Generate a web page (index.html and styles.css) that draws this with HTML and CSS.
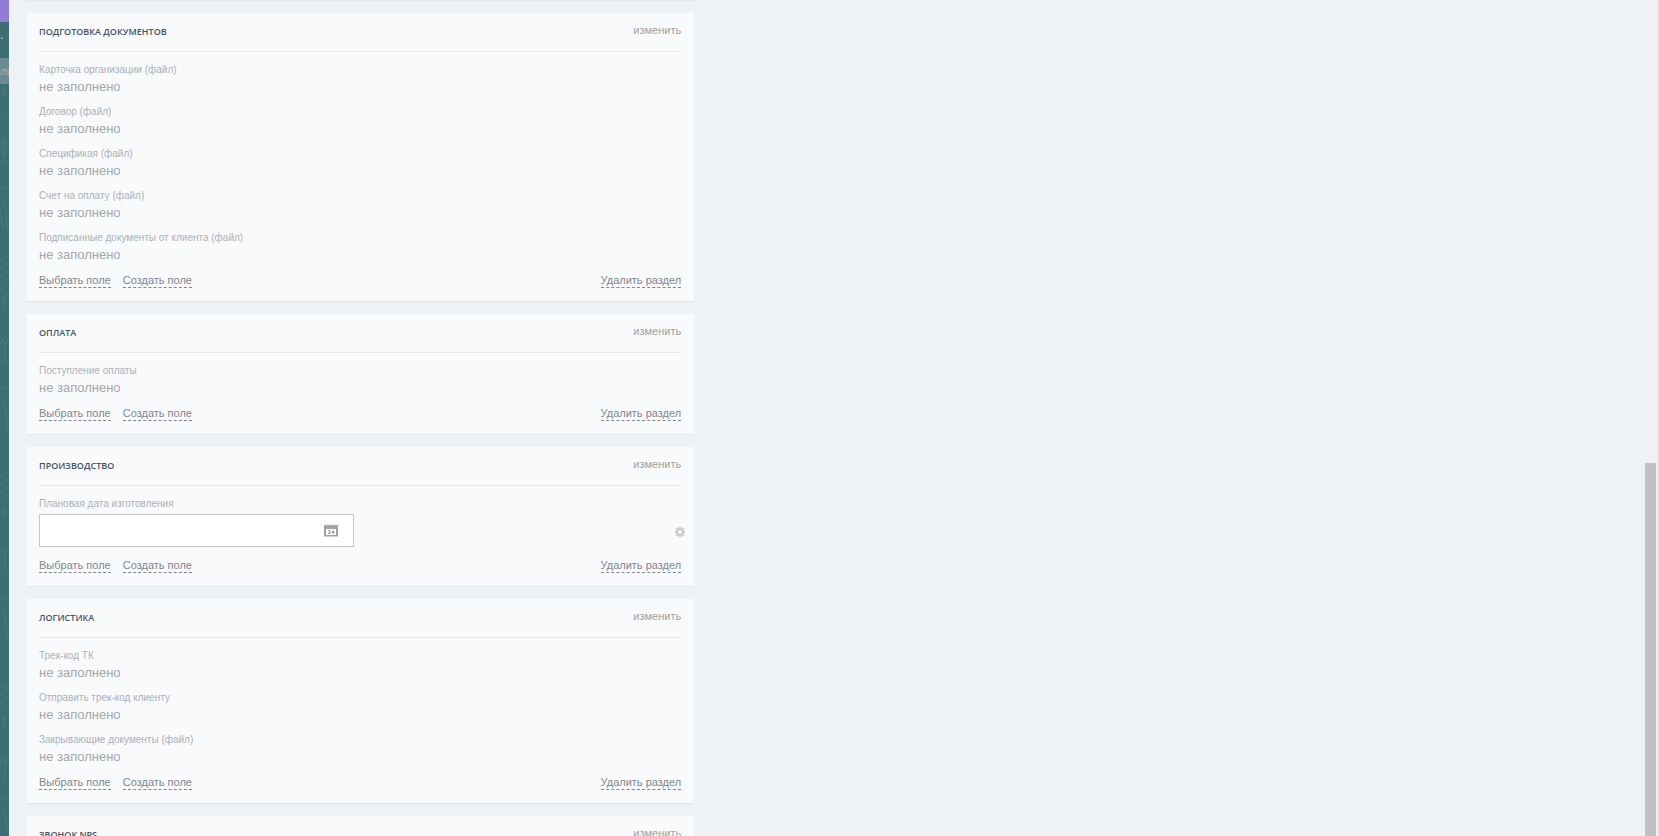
FILE: index.html
```html
<!DOCTYPE html>
<html lang="ru">
<head>
    <meta charset="UTF-8">
    <meta name="viewport" content="width=device-width, initial-scale=1.0">
    <title>Сделка</title>
    <link rel="stylesheet" href="styles.css">
</head>
<body>
    <div class="backdrop">
        <div class="backdrop-header"></div>
        <div class="backdrop-tools"><span>.</span></div>
        <div class="backdrop-tab"><span>ли</span></div>
        <svg class="backdrop-pattern" width="9" height="752" viewBox="0 0 9 752" fill="none" stroke="#4a7a7e">
            <path d="M4 2l1 4 1 1-1 1-1 4-1-4-1-1 1-1zM0 32l2 4M0 62l3-8 2 6 4-7M2 58l1 14 4-10M0 78l5-2v-16M0 106l9-3M0 116l4 0 4 30M0 124l3 20 6-4M0 175l9 5M0 183l9 5M0 191l9 6M0 198l9 6M0 205l9 7"/>
            <path d="M4 212l1 4 1 1-1 1-1 4-1-4-1-1 1-1zM0 262l3-8 2 6 4-7M0 278l5-2v-16M0 306l9-3M0 316l4 0 4 30M0 391l9 5M0 399l9 5M0 407l9 6"/>
            <path d="M4 423l1 4 1 1-1 1-1 4-1-4-1-1 1-1zM0 472l3-8 2 6 4-7M0 488l5-2v-16M0 516l9-3M0 526l4 0 4 30M0 601l9 5M0 609l9 5M0 617l9 6"/>
            <path d="M4 633l1 4 1 1-1 1-1 4-1-4-1-1 1-1zM0 682l3-8 2 6 4-7M0 698l5-2v-16M0 716l9-3M0 726l4 0 4 24"/>
        </svg>
    </div>

    <main class="panel">
        <div class="column">
            <div class="card-end"></div>

            <section class="card">
                <header class="card-header">
                    <h2>Подготовка документов</h2>
                    <button type="button" class="edit-btn">изменить</button>
                </header>
                <dl class="fields">
                    <div class="field"><dt>Карточка организации (файл)</dt><dd>не заполнено</dd></div>
                    <div class="field"><dt>Договор (файл)</dt><dd>не заполнено</dd></div>
                    <div class="field"><dt>Спецификая (файл)</dt><dd>не заполнено</dd></div>
                    <div class="field"><dt>Счет на оплату (файл)</dt><dd>не заполнено</dd></div>
                    <div class="field"><dt>Подписанные документы от клиента (файл)</dt><dd>не заполнено</dd></div>
                </dl>
                <footer class="card-footer">
                    <a href="#">Выбрать поле</a>
                    <a href="#">Создать поле</a>
                    <a href="#" class="delete-link">Удалить раздел</a>
                </footer>
            </section>

            <section class="card">
                <header class="card-header">
                    <h2>Оплата</h2>
                    <button type="button" class="edit-btn">изменить</button>
                </header>
                <dl class="fields">
                    <div class="field"><dt>Поступление оплаты</dt><dd>не заполнено</dd></div>
                </dl>
                <footer class="card-footer">
                    <a href="#">Выбрать поле</a>
                    <a href="#">Создать поле</a>
                    <a href="#" class="delete-link">Удалить раздел</a>
                </footer>
            </section>

            <section class="card">
                <header class="card-header">
                    <h2>Производство</h2>
                    <button type="button" class="edit-btn">изменить</button>
                </header>
                <div class="fields">
                    <div class="field">
                        <label for="plan-date">Плановая дата изготовления</label>
                        <div class="date-row">
                            <div class="date-box">
                                <input type="text" id="plan-date">
                                <button type="button" class="calendar-btn" aria-label="Календарь">
                                    <svg width="14" height="13" viewBox="0 0 14 13">
                                        <path fill="#a0a0a0" fill-rule="evenodd" d="M0 1h14v11H0zM2 5v6h10V5z"/>
                                        <path fill="#d0d0d0" d="M0 12h14v1H0zM3 0h2v2H3zM9 0h2v2H9z"/>
                                        <path fill="none" stroke="#a0a0a0" d="M4 6.500h2v1.500l-2 1.500h2.500M9.500 10V6.500L7.500 8.500H10.500"/>
                                    </svg>
                                </button>
                            </div>
                            <button type="button" class="gear-btn" aria-label="Настройки поля">
                                <svg width="10" height="10" viewBox="0 0 10 10" fill="none" stroke="#c6c9cc">
                                    <circle cx="5" cy="5" r="3" stroke-width="2"/>
                                    <path stroke-width="2" d="M5 0v1M5 9v1M0 5h1M9 5h1M1.300 1.300l.8.8M7.900 7.900l.8.8M8.700 1.300l-.8.8M2.100 7.900l-.8.8"/>
                                </svg>
                            </button>
                        </div>
                    </div>
                </div>
                <footer class="card-footer">
                    <a href="#">Выбрать поле</a>
                    <a href="#">Создать поле</a>
                    <a href="#" class="delete-link">Удалить раздел</a>
                </footer>
            </section>

            <section class="card">
                <header class="card-header">
                    <h2>Логистика</h2>
                    <button type="button" class="edit-btn">изменить</button>
                </header>
                <dl class="fields">
                    <div class="field"><dt>Трек-код ТК</dt><dd>не заполнено</dd></div>
                    <div class="field"><dt>Отправить трек-код клиенту</dt><dd>не заполнено</dd></div>
                    <div class="field"><dt>Закрывающие документы (файл)</dt><dd>не заполнено</dd></div>
                </dl>
                <footer class="card-footer">
                    <a href="#">Выбрать поле</a>
                    <a href="#">Создать поле</a>
                    <a href="#" class="delete-link">Удалить раздел</a>
                </footer>
            </section>

            <section class="card">
                <header class="card-header">
                    <h2>Звонок NPS</h2>
                    <button type="button" class="edit-btn">изменить</button>
                </header>
            </section>
        </div>
    </main>

    <div class="scrollbar"><div class="scrollbar-thumb"></div></div>
</body>
</html>
```
FILE: styles.css
```css
* {
    box-sizing: border-box;
}
body {
    margin: 0;
    height: 100vh;
    display: flex;
    overflow: hidden;
    background-color: #eef2f5;
    font-family: "Liberation Sans", Arial, sans-serif;
    font-size: 11px;
    color: #80868e;
}
button {
    padding: 0;
    border: none;
    background: none;
    font-family: inherit;
    cursor: pointer;
}
svg {
    display: block;
}

/* Strip of the page under the slider */
.backdrop {
    flex: none;
    width: 9px;
    overflow: hidden;
    background-color: #3d6e73;
}
.backdrop-header {
    height: 22px;
    background-color: #927dd4;
}
.backdrop-tools {
    height: 36px;
    line-height: 26px;
    font-size: 12px;
    color: #c5d3d5;
}
.backdrop-tab {
    height: 26px;
    line-height: 26px;
    background-color: #6b8c8e;
    font-size: 11px;
    color: #b5aba6;
}

/* Deal card */
.panel {
    flex: 1;
    padding: 0 18px;
}
.column {
    width: 41.75%;
    min-width: 400px;
}
.card-end {
    height: 1px;
    margin-bottom: 12px;
    background-color: #e3e7ea;
}
.card {
    margin-bottom: 12px;
    padding: 0 13px 13px 12px;
    background-color: #f9fafc;
    border-bottom: 1px solid #e1e6e9;
}
.card-header {
    display: flex;
    justify-content: space-between;
    align-items: center;
    height: 39px;
    border-bottom: 1px solid #e4e7ea;
}
.card-header h2 {
    margin: 0;
    padding-bottom: 2px;
    font-family: "Open Sans", sans-serif;
    font-size: 9px;
    font-weight: 600;
    text-transform: uppercase;
    color: #48515f;
}
.edit-btn {
    font-size: 11px;
    line-height: 14px;
    padding-bottom: 4px;
    color: #a0a0a0;
}
.fields {
    margin: 0;
    padding-top: 11px;
}
.field {
    padding-bottom: 8px;
}
.field dt,
.field label {
    display: block;
    font-size: 10px;
    line-height: 14px;
    color: #acb0b6;
}
.field dd {
    margin: 0;
    font-size: 13px;
    line-height: 20px;
    color: #a3a6ab;
}
.date-row {
    display: flex;
    justify-content: space-between;
    align-items: center;
    margin-right: -4px;
    padding: 3px 0;
}
.date-box {
    display: flex;
    align-items: center;
    width: 315px;
    height: 33px;
    padding-right: 15px;
    background-color: #fff;
    border: 1px solid #c4c7cc;
}
.date-box input {
    flex: 1;
    min-width: 0;
    height: 31px;
    padding: 0 10px;
    border: none;
    outline: none;
    background: none;
    font-size: 13px;
    color: #535c69;
}
.gear-btn {
    padding-top: 2px;
}
.card-footer {
    display: flex;
    gap: 12px;
}
.card-footer a {
    line-height: 14px;
    color: #80868e;
    text-decoration: none;
    border-bottom: 1px dashed #80868e;
}
.card-footer .delete-link {
    margin-left: auto;
}

/* Scrollbar of the slider */
.scrollbar {
    flex: none;
    display: flex;
    flex-direction: column;
    justify-content: flex-end;
    width: 16px;
    padding: 0 2px;
    background-color: #f1f1f1;
    border-right: 1px solid #d5e3e8;
}
.scrollbar-thumb {
    height: 44.6%;
    background-color: #c1c1c1;
}
```
